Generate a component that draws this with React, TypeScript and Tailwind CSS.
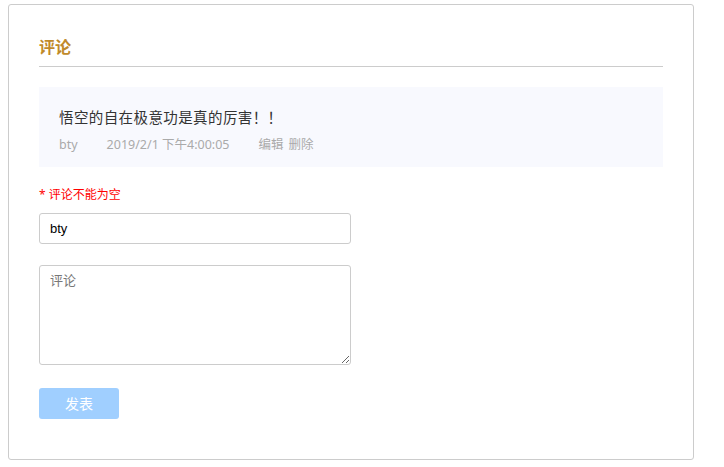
import React from "react";

export default function App() {
  return (
    <div
      className="w-[724px] h-[467px] bg-white pt-[4px] pl-[8px]"
      style={{ fontFamily: '"Noto Sans", "Noto Sans CJK SC", sans-serif' }}
    >
      <div className="w-[686px] h-[456px] border border-[#cccccc] rounded-[3px] px-[30px] pt-[30px]">
        <div className="border-b border-[#cccccc] pb-[7px]">
          <h2 className="text-[16px] leading-[24px] font-bold text-[#c08a2a]">评论</h2>
        </div>
        <div className="mt-[20px] h-[80px] bg-[#f8f9fe] px-[20px] pt-[20px]">
          <p className="text-[14.5px] leading-[20px] tracking-[0.4px] text-[#333333]">悟空的自在极意功是真的厉害！！</p>
          <div className="mt-[8px] flex text-[12.5px] leading-[20px] text-[#aaaaaa]">
            <span className="mr-[29px]">bty</span>
            <span className="mr-[29px]">2019/2/1 下午4:00:05</span>
            <span className="mr-[5px]">编辑</span>
            <span>删除</span>
          </div>
        </div>
        <p className="mt-[20px] text-[12px] leading-[16px] text-[#ff0000]">* 评论不能为空</p>
        <input
          className="mt-[10px] block w-[312px] h-[31px] border border-[#cccccc] rounded-[3px] px-[10px] text-[13px] text-black outline-none"
          style={{ fontFamily: '"Liberation Sans", "Noto Sans CJK SC", sans-serif' }}
          defaultValue="bty"
        />
        <textarea
          className="mt-[21px] block w-[312px] h-[100px] border border-[#cccccc] rounded-[3px] px-[10px] py-[6px] text-[13px] leading-[18px] text-black placeholder:text-[#777777] outline-none"
          style={{ fontFamily: '"Liberation Sans", "Noto Sans CJK SC", sans-serif' }}
          placeholder="评论"
        />
        <button className="mt-[23px] block w-[80px] h-[31px] rounded-[3px] bg-[#a0cfff] text-white text-[14px]">
          发表
        </button>
      </div>
    </div>
  );
}
